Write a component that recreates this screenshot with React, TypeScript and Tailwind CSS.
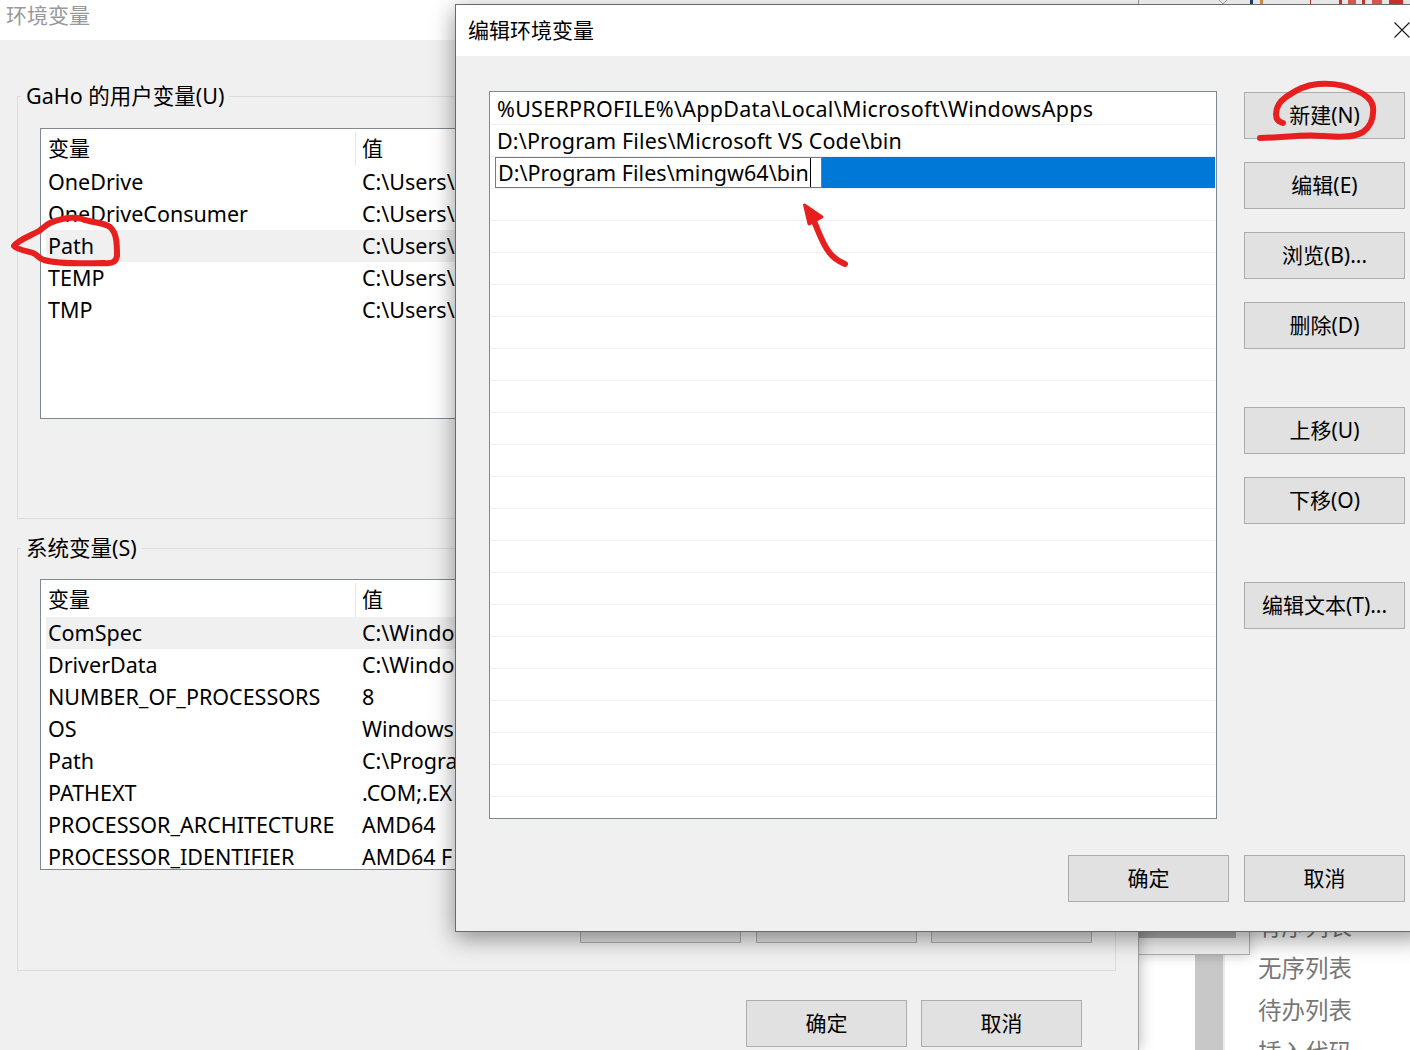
const font = "font-['Noto_Sans','Noto_Sans_CJK_SC',sans-serif]";

const userVars = [
  ["OneDrive", "C:\\Users\\"],
  ["OneDriveConsumer", "C:\\Users\\"],
  ["Path", "C:\\Users\\"],
  ["TEMP", "C:\\Users\\"],
  ["TMP", "C:\\Users\\"],
];

const systemVars = [
  ["ComSpec", "C:\\Windo"],
  ["DriverData", "C:\\Windo"],
  ["NUMBER_OF_PROCESSORS", "8"],
  ["OS", "Windows"],
  ["Path", "C:\\Progra"],
  ["PATHEXT", ".COM;.EX"],
  ["PROCESSOR_ARCHITECTURE", "AMD64"],
  ["PROCESSOR_IDENTIFIER", "AMD64 F"],
];

const pathRows = [
  { text: "%USERPROFILE%\\AppData\\Local\\Microsoft\\WindowsApps", spacing: "tracking-[0.27px]" },
  { text: "D:\\Program Files\\Microsoft VS Code\\bin", spacing: "tracking-[0.15px]" },
];

function WinButton({ label, className = "" }: { label?: string; className?: string }) {
  return (
    <div className={`flex h-[47px] w-[161px] shrink-0 items-center justify-center border border-[#adadad] bg-[#e1e1e1] text-[21px] text-black ${className}`}>
      {label}
    </div>
  );
}

function VarTable({ rows, active, className = "" }: { rows: string[][]; active: number; className?: string }) {
  return (
    <div className={`h-[291px] w-[1052px] overflow-hidden border border-[#828790] bg-white text-[21.5px] leading-[32px] text-black ${className}`}>
      <div className="flex h-[37px] pl-[7px] pt-[3px] text-[21px]">
        <div className="h-[34px] w-[307px]">变量</div>
        <div className="h-[34px] border-l border-[#e5e5e5] pl-[6px]">值</div>
      </div>
      {rows.map(([name, value], i) => (
        <div key={name} className={`ml-[5px] flex h-[32px] pl-[2px] ${i === active ? "bg-[#f0f0f0]" : ""}`}>
          <div className="w-[314px] whitespace-nowrap">{name}</div>
          <div className="whitespace-nowrap">{value}</div>
        </div>
      ))}
    </div>
  );
}

function GroupBox({ title, children }: { title: string; children: React.ReactNode }) {
  return (
    <fieldset className="ml-[17px] h-[439px] w-[1099px] border border-[#dcdcdc]">
      <legend className="ml-[3px] px-[5px] text-[21.5px] leading-[32px] text-black">{title}</legend>
      {children}
    </fieldset>
  );
}

function BackWindow() {
  return (
    <div className="absolute left-0 top-0 flex h-[1050px] w-[1139px] flex-col border-r border-[#a0a0a0] bg-[#f0f0f0] shadow-[0_0_14px_rgba(0,0,0,0.3)]">
      <div className="h-[40px] bg-white pl-[6px] text-[21px] leading-[30px] text-[#999999]">环境变量</div>
      <div className="flex flex-col gap-[13px] pt-[40px]">
        <GroupBox title="GaHo 的用户变量(U)">
          <VarTable rows={userVars} active={2} className="ml-[22px] mt-[16px]" />
        </GroupBox>
        <GroupBox title="系统变量(S)">
          <VarTable rows={systemVars} active={0} className="ml-[22px] mt-[15px]" />
          <div className="mt-[26px] flex pl-[562px]">
            <WinButton className="mr-[15px]" />
            <WinButton className="mr-[14px]" />
            <WinButton />
          </div>
        </GroupBox>
      </div>
      <div className="mt-[29px] flex gap-[14px] pl-[746px]">
        <WinButton label="确定" />
        <WinButton label="取消" />
      </div>
    </div>
  );
}

function PathDialog() {
  return (
    <div className="absolute left-[455px] top-[4px] flex h-[928px] w-[970px] flex-col border border-[#6b6b6b] bg-[#f0f0f0] shadow-[0_6px_22px_rgba(0,0,0,0.42)]">
      <div className="flex h-[51px] items-center justify-between bg-white pl-[12px] text-[21px] text-black">
        <span className="mt-px">编辑环境变量</span>
        <svg className="mb-[2px] mr-[14px]" width="16" height="16" viewBox="0 0 16 16" fill="none" stroke="#1a1a1a" strokeWidth="1.1">
          <path d="M0.5 0.5 15.5 15.5M15.5 0.5 0.5 15.5" />
        </svg>
      </div>
      <div className="flex gap-[27px] pl-[33px] pt-[35px]">
        <div className="h-[728px] w-[728px] shrink-0 overflow-hidden border border-[#828790] bg-white px-px pt-px text-[21.5px] leading-[32px] text-black">
          {pathRows.map((row) => (
            <div key={row.text} className={`h-[32px] whitespace-nowrap border-b border-[#f0f0f0] pl-[6px] ${row.spacing}`}>{row.text}</div>
          ))}
          <div className="flex h-[32px] border-b border-[#f0f0f0] pl-[4px]">
            <div className="flex h-[31px] w-[327px] items-center border border-[#7a7a7a] pl-[2px]">
              <span className="h-[29px] whitespace-nowrap border-r border-black pr-px leading-[29px] tracking-[0.04px]">D:\Program Files\mingw64\bin</span>
            </div>
            <div className="h-[31px] flex-1 bg-[#0078d7]" />
          </div>
          {Array.from({ length: 20 }, (_, i) => (
            <div key={i} className="h-[32px] border-b border-[#f0f0f0]" />
          ))}
        </div>
        <div className="flex flex-col gap-[58px] pt-px">
          <div className="flex flex-col gap-[23px]">
            <WinButton label="新建(N)" />
            <WinButton label="编辑(E)" />
            <WinButton label="浏览(B)..." />
            <WinButton label="删除(D)" />
          </div>
          <div className="flex flex-col gap-[23px]">
            <WinButton label="上移(U)" />
            <WinButton label="下移(O)" />
          </div>
          <WinButton label="编辑文本(T)..." />
        </div>
      </div>
      <div className="mt-[36px] flex gap-[15px] pl-[612px]">
        <WinButton label="确定" />
        <WinButton label="取消" />
      </div>
    </div>
  );
}

// editor behind the dialogs, only its lower right corner and top edge show
function BehindEditor() {
  return (
    <>
      <div className="absolute left-[1139px] top-0 z-10 flex h-[4px] w-[271px] overflow-hidden bg-[#e6e6e6]">
        <svg className="ml-[76px] shrink-0" width="16" height="4" viewBox="0 0 16 4" fill="none" stroke="#9a9a9a">
          <path d="M1 -3 8 4 15 -3" />
        </svg>
        <div className="ml-[19px] h-full w-[3px] bg-[#1f3a6e]" />
        <div className="ml-[7px] h-full w-[3px] bg-[#c98a3a]" />
        <div className="ml-[47px] h-full w-px bg-[#b03030]" />
        <div className="ml-[28px] h-full w-[3px] bg-[#c9302c]" />
        <div className="ml-[6px] h-full w-[8px] bg-[#d9534f]" />
        <div className="ml-[6px] h-full w-[3px] bg-[#c9302c]" />
        <div className="ml-[7px] h-full w-[10px] bg-[#d9534f]" />
        <div className="ml-[7px] h-full w-[14px] bg-[#c9302c]" />
      </div>
      <div className="absolute bottom-0 left-[1195px] top-[950px] w-[28px] bg-[#c8c8c8]" />
      <div className="absolute bottom-0 left-[1223px] top-[950px] w-[2px] bg-[#ececec]" />
      <div className="absolute left-[1258px] top-[905px] flex flex-col text-[23.5px] leading-[42px] text-[#777777]">
        <span>有序列表</span>
        <span>无序列表</span>
        <span>待办列表</span>
        <span>插入代码</span>
      </div>
      <div className="absolute left-[1139px] top-[4px] h-[951px] w-[111px] border-b border-r border-[#adadad] bg-[#f0f0f0] shadow-[0_0_12px_rgba(0,0,0,0.2)]">
        <div className="h-[934px] w-[97px] bg-[#adadad]" />
      </div>
    </>
  );
}

function RedMarks() {
  return (
    <svg className="pointer-events-none absolute left-0 top-0 z-20" width="1410" height="1050" viewBox="0 0 1410 1050" fill="none" stroke="#e81f1f" strokeWidth="6" strokeLinecap="round" strokeLinejoin="round">
      <path d="M50 223C62 218 72 216 82 219C92 223 103 222 110 227C117 233 117 245 117 256C116 262 112 264 104 263C88 263 62 265 44 260C38 258 38 255 33 253C27 251 18 250 14 246C18 240 30 236 39 231C43 228 46 225 50 223Z" />
      <path d="M1283 123C1278 122 1276 119 1276 114C1276 107 1279 102 1286 97C1296 90 1305 85 1318 84C1333 83 1345 85 1355 90C1365 94 1372 99 1373 107C1374 118 1370 127 1363 132C1352 138 1338 137 1322 136C1302 134 1281 138 1260 138" />
      <path d="M813 219C819 232 822 243 829 252C834 259 840 262 845 264" strokeWidth="6" />
      <path d="M804.5 205 809 224 822 217Z" fill="#e81f1f" strokeWidth="3" />
    </svg>
  );
}

export default function App() {
  return (
    <div className={`relative h-[1050px] w-[1410px] overflow-hidden bg-white ${font}`}>
      <BehindEditor />
      <BackWindow />
      <PathDialog />
      <RedMarks />
    </div>
  );
}
